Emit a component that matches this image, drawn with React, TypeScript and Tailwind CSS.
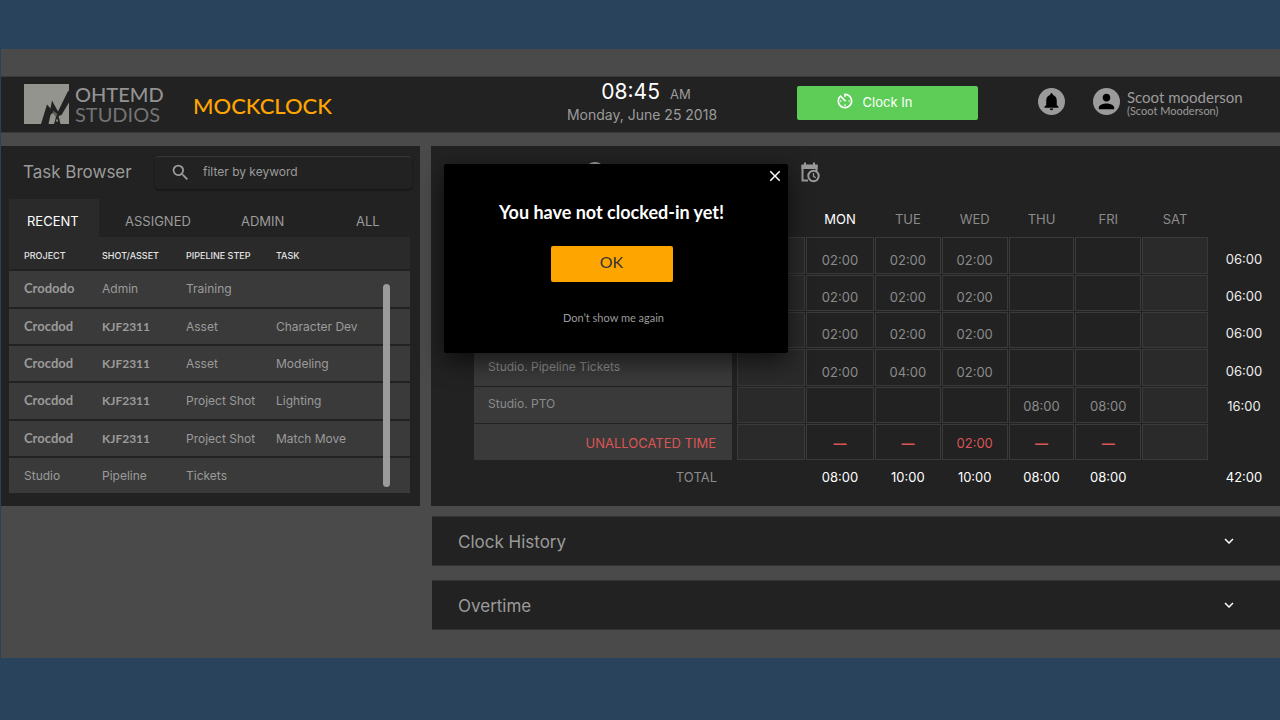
import React, { useState } from "react";
import {
  MdAccountCircle,
  MdAvTimer,
  MdClose,
  MdExpandMore,
  MdNotifications,
  MdPerson,
  MdSearch,
} from "react-icons/md";

const tasks = [
  ["Crododo", "Admin", "Training", ""],
  ["Crocdod", "KJF2311", "Asset", "Character Dev"],
  ["Crocdod", "KJF2311", "Asset", "Modeling"],
  ["Crocdod", "KJF2311", "Project Shot", "Lighting"],
  ["Crocdod", "KJF2311", "Project Shot", "Match Move"],
  ["Studio", "Pipeline", "Tickets", ""],
];

const days = ["", "MON", "TUE", "WED", "THU", "FRI", "SAT"];

type Row = { label: string; hours: string[]; total: string };

const rows: Row[] = [
  { label: "", hours: ["", "02:00", "02:00", "02:00", "", "", ""], total: "06:00" },
  { label: "", hours: ["", "02:00", "02:00", "02:00", "", "", ""], total: "06:00" },
  { label: "", hours: ["", "02:00", "02:00", "02:00", "", "", ""], total: "06:00" },
  { label: "Studio. Pipeline Tickets", hours: ["", "02:00", "04:00", "02:00", "", "", ""], total: "06:00" },
  { label: "Studio. PTO", hours: ["", "", "", "", "08:00", "08:00", ""], total: "16:00" },
];

const unallocated = ["", "––", "—", "02:00", "—", "—", ""];
const totals = ["", "08:00", "10:00", "10:00", "08:00", "08:00", ""];

const geo = "font-[Lato,sans-serif]";

function LogoMark() {
  return (
    <svg viewBox="0 0 45 40" className="h-10 w-[45px]" aria-hidden="true">
      <rect width="45" height="40" fill="#93948e" />
      <path
        d="M17 40L23 20.500L26.500 24.500L28 16.500L34 27.500L44.300 6.500L45 8V18.500L37.500 31L34.500 32L36.500 40H30L31.500 35L32 32L29 28.500L26.500 31L24.500 40Z"
        fill="#222"
      />
      <path d="M29 26.500L33.500 30L32 33L29.500 30Z" fill="#5f5f5b" />
      <path d="M33 34.500L34.300 37.500H31.700Z" fill="#93948e" />
    </svg>
  );
}

function CalendarClock() {
  return (
    <svg viewBox="0 0 20 21" className="h-[21px] w-5" fill="none" stroke="#9b9b9b" aria-hidden="true">
      <path d="M8 18.500H2.500V3.500H16.500V9" strokeWidth="2" />
      <path d="M1.500 3H17.500V7H1.500ZM4 0.500H6V4H4ZM13 0.500H15V4H13Z" fill="#9b9b9b" stroke="none" />
      <circle cx="13.500" cy="14" r="5.200" fill="#222" strokeWidth="2" />
      <path d="M13.500 11V14.300L15.800 15.700" strokeWidth="1.300" />
    </svg>
  );
}

function Header() {
  return (
    <header className="flex h-[57px] items-center border-y border-[#3a3a3a] bg-[#222] pr-[39px] pb-[2px] pl-[23px]">
      <div className="flex w-[169px] items-center gap-[6px]">
        <LogoMark />
        <div className={`${geo} text-[20px] leading-5`}>
          <div className="font-medium text-[#939393]">OHTEMD</div>
          <div className="text-[#747474]">STUDIOS</div>
        </div>
      </div>
      <h1 className={`${geo} pt-1 text-[22px] leading-7 font-medium text-[#ffa500]`}>MOCKCLOCK</h1>
      <div className="mb-[2px] ml-auto w-[156px] text-center text-sm leading-5 text-[#9b9b9b]">
        <div className="flex items-baseline justify-center gap-[10px] pl-2 leading-[22px]">
          <span className="text-[21px] text-white">08:45</span>
          <span className="text-[13px]">AM</span>
        </div>
        <div>Monday, June 25 2018</div>
      </div>
      <button className="mb-[2px] ml-[77px] flex h-[34px] w-[181px] items-center justify-center gap-2 rounded-xs bg-[#5ecd58] pr-7 text-[13px] text-white">
        <MdAvTimer className="mb-1 size-5" />
        Clock In
      </button>
      <div className="ml-[60px] flex items-center gap-7">
        <button aria-label="Notifications" className="mb-1 flex size-[27px] items-center justify-center rounded-full bg-[#9b9b9b] text-black">
          <MdNotifications className="size-[21px]" />
        </button>
        <button className={`${geo} mb-[2px] flex items-center gap-[7px] text-left text-[#9b9b9b]`}>
          <span className="mb-[2px] flex size-[27px] items-center justify-center rounded-full bg-[#9b9b9b] text-black">
            <MdPerson className="size-[23px]" />
          </span>
          <span className="flex w-[114px] flex-col whitespace-nowrap">
            <span className="text-[15px] leading-4">Scoot mooderson</span>
            <span className="text-[11px] leading-3">(Scoot Mooderson)</span>
          </span>
        </button>
      </div>
    </header>
  );
}

function TaskBrowser() {
  return (
    <section className="bg-[#222] pb-[13px] text-[#9b9b9b]">
      <div className="flex h-[53px] items-center justify-between pr-2 pl-[22px]">
        <h2 className="text-[17px]">Task Browser</h2>
        <label className="flex h-[33px] w-[257px] items-center gap-3 rounded-sm border-t border-[#383838] pb-[2px] pl-[15px] shadow-[0_1px_2px_#111]">
          <MdSearch className="size-[21px]" />
          <input
            type="text"
            aria-label="Filter tasks"
            placeholder="filter by keyword"
            className="min-w-0 flex-1 bg-transparent text-xs outline-none placeholder:text-[#9b9b9b]"
          />
        </label>
      </div>
      <div className="pr-[10px] pl-2">
        <div role="tablist" className="grid h-[38px] grid-cols-[116px_116px_115px_auto] text-left text-[13px] [&>button]:pt-2 [&>button]:text-left">
          <button role="tab" aria-selected="true" className="w-[90px] bg-[#2a2a2a] pl-[18px] text-white">RECENT</button>
          <button role="tab" aria-selected="false">ASSIGNED</button>
          <button role="tab" aria-selected="false">ADMIN</button>
          <button role="tab" aria-selected="false">ALL</button>
        </div>
        <div className="relative">
          <table className="w-full table-fixed border-separate border-spacing-0 text-left text-xs">
            <colgroup>
              <col className="w-[93px]" />
              <col className="w-[84px]" />
              <col className="w-[90px]" />
              <col />
            </colgroup>
            <thead>
              <tr className="h-8 text-[9px] text-[#e4e4e4] [&>th]:bg-[#2a2a2a] [&>th]:pt-[6px] [&>th]:font-medium">
                <th className="pl-[15px]">PROJECT</th>
                <th>SHOT/ASSET</th>
                <th>PIPELINE STEP</th>
                <th>TASK</th>
              </tr>
            </thead>
            <tbody>
              {tasks.map(([project, shot, step, task], i) => (
                <tr
                  key={i}
                  className={`${i % 3 === 0 ? "h-[38px]" : "h-[37px]"} [&>td]:border-t-2 [&>td]:border-[#222] [&>td]:bg-[#3a3a3a] [&>td]:p-0 [&>td]:whitespace-nowrap`}
                >
                  <td>
                    <span className={project === "Studio" ? "pl-[15px]" : "pl-[15px] font-[Lato,sans-serif] text-[13px] font-bold"}>{project}</span>
                  </td>
                  <td className={shot === "KJF2311" ? "font-[Lato,sans-serif] font-bold" : ""}>{shot}</td>
                  <td>{step}</td>
                  <td>{task}</td>
                </tr>
              ))}
            </tbody>
          </table>
          <div className="absolute top-[47px] right-5 bottom-[6px] w-[7px] rounded-full bg-[#9b9b9b]" />
        </div>
      </div>
    </section>
  );
}

function hourCell(i: number) {
  return i === 0 || i === 6 ? "border border-[#3a3a3a] bg-[#2a2a2a]" : "border border-[#3a3a3a]";
}

function Timesheet() {
  return (
    <table className="w-full table-fixed border-separate border-spacing-[1px] text-center text-[13px] text-[#8b8b8b] [&_td]:p-0 [&_th]:p-0">
      <colgroup>
        <col className="w-[262px]" />
        {days.map((_, i) => (
          <col key={i} className={i < 2 ? "w-[68px]" : ""} />
        ))}
        <col className="w-[70px]" />
      </colgroup>
      <thead>
        <tr className="h-8 [&>th]:font-normal">
          <th />
          {days.map((d, i) => (
            <th key={i} className={d === "MON" ? "text-white" : ""}>{d}</th>
          ))}
          <th />
        </tr>
      </thead>
      <tbody>
        {rows.map((r, i) => (
          <tr key={i} className={i % 3 === 0 ? "h-[37px]" : "h-9"}>
            <td>
              <div className="mr-1 flex h-9 items-center bg-[#3a3a3a] pb-[2px] pl-[14px] text-xs">{r.label}</div>
            </td>
            {r.hours.map((h, j) => (
              <td key={j} className={hourCell(j)}>
                <div className={i < 4 ? "pt-[10px]" : "pt-1"}>{h}</div>
              </td>
            ))}
            <td className="text-[#eee]">
              <div className={i < 4 ? "pt-2" : "pt-1"}>{r.total}</div>
            </td>
          </tr>
        ))}
        <tr className="h-9 text-[#dc5555]">
          <td>
            <div className="mr-1 flex h-9 items-center justify-end bg-[#3a3a3a] pt-1 pr-4">UNALLOCATED TIME</div>
          </td>
          {unallocated.map((h, j) => (
            <td key={j} className={hourCell(j)}>
              <div className={h.includes(":") ? "pt-1" : "pt-1 font-bold"}>{h}</div>
            </td>
          ))}
          <td />
        </tr>
      </tbody>
      <tfoot>
        <tr className="h-[33px] text-white">
          <td>
            <div className="mr-1 pr-[15px] text-right text-[#8b8b8b]">TOTAL</div>
          </td>
          {totals.map((t, i) => (
            <td key={i}>{t}</td>
          ))}
          <td>42:00</td>
        </tr>
      </tfoot>
    </table>
  );
}

function ClockInDialog({ onClose }: { onClose: () => void }) {
  return (
    <div
      role="dialog"
      aria-labelledby="clock-title"
      className={`${geo} absolute top-[18px] left-[13px] flex h-[189px] w-[344px] flex-col items-center rounded-xs bg-black pr-[9px] shadow-[0_8px_24px_rgba(0,0,0,0.6)]`}
    >
      <button aria-label="Close" onClick={onClose} className="absolute top-[3px] right-1 text-white">
        <MdClose className="size-[18px]" />
      </button>
      <h2 id="clock-title" className="mt-9 text-[18px] leading-6 font-bold whitespace-nowrap text-white">
        You have not clocked-in yet!
      </h2>
      <button onClick={onClose} className="mt-[22px] h-9 w-[122px] rounded-xs bg-[#ffa500] pb-1 text-base text-[#333]">
        OK
      </button>
      <button onClick={onClose} className="mt-7 ml-1 text-[11px] leading-4 text-[#9b9b9b]">Don’t show me again</button>
    </div>
  );
}

function Drawer({ title }: { title: string }) {
  return (
    <button className="ml-px flex h-[50px] items-center justify-between border-y border-[#333] bg-[#222] pr-[42px] pl-[26px] text-[17px] text-[#9b9b9b]">
      <span className="pt-1">{title}</span>
      <MdExpandMore className="size-[18px] text-white" />
    </button>
  );
}

export default function App() {
  const [open, setOpen] = useState(true);
  return (
    <div className="min-h-screen bg-[#2a435c] py-[49px] font-[Inter,sans-serif]">
      <div className="ml-px bg-[#4a4a4a] pt-[27px] pb-7">
        <Header />
        <main className="mt-[13px] grid grid-cols-[419px_1fr] items-start gap-[11px]">
          <TaskBrowser />
          <div className="flex flex-col">
            <section className="relative bg-[#222] pb-[11px] pl-[42px]">
              <div className="flex h-[57px] items-start gap-[144px] pt-[14px] pl-[110px] text-[#9b9b9b]">
                <MdAccountCircle className="size-6" />
                <MdPerson className="size-6" />
                <button aria-label="Schedule" className="-ml-[119px] pt-[2px]">
                  <CalendarClock />
                </button>
              </div>
              <Timesheet />
              {open && <ClockInDialog onClose={() => setOpen(false)} />}
            </section>
            <div className="mt-[10px] flex flex-col gap-[14px]">
              <Drawer title="Clock History" />
              <Drawer title="Overtime" />
            </div>
          </div>
        </main>
      </div>
    </div>
  );
}
